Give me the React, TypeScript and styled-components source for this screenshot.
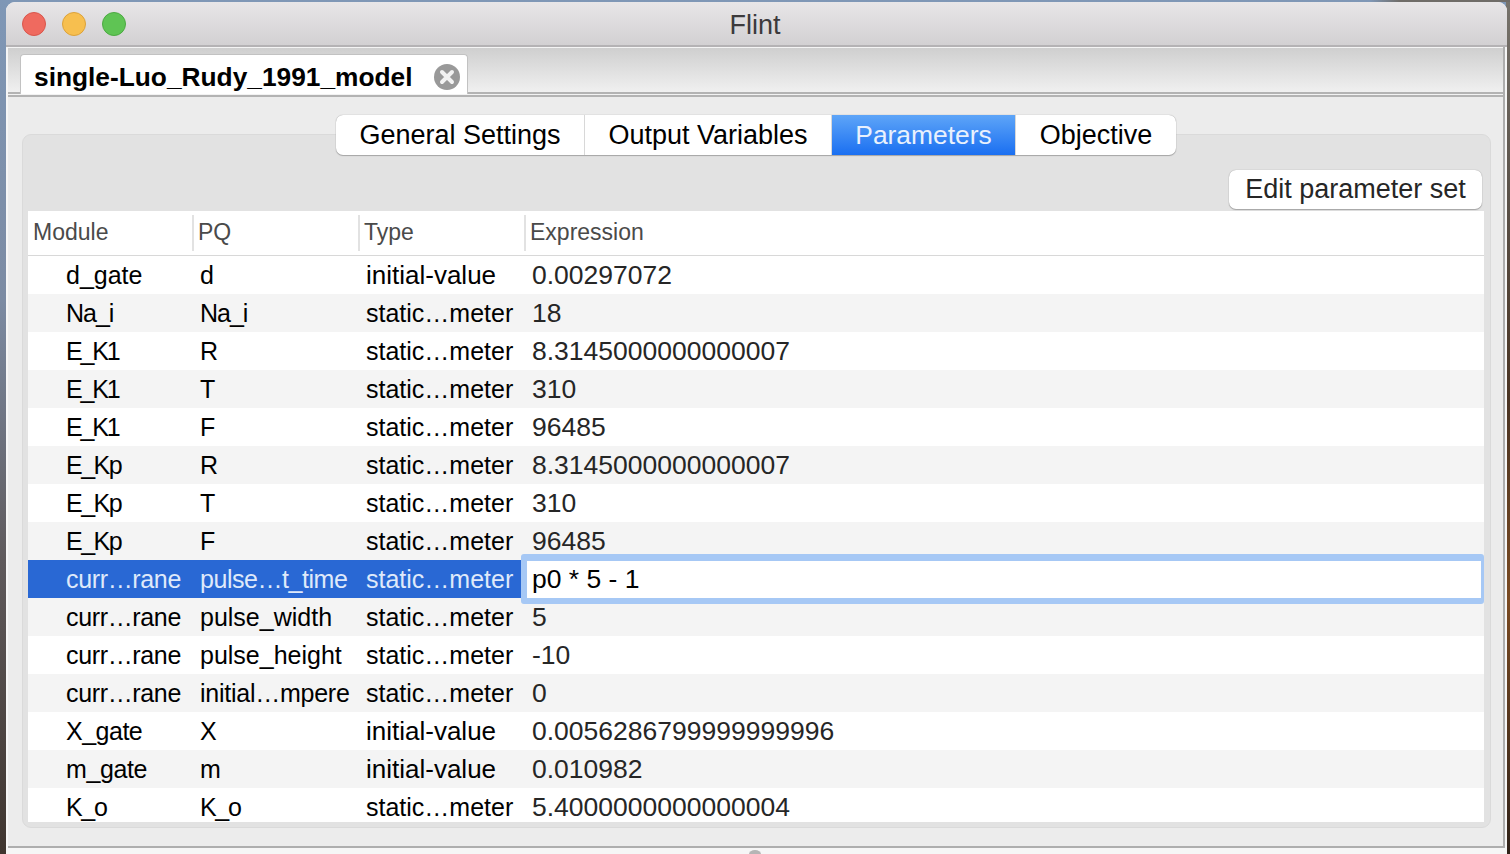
import styled, { createGlobalStyle } from 'styled-components'

const GlobalStyle = createGlobalStyle`
  html, body {
    margin: 0;
    padding: 0;
    height: 100%;
    overflow: hidden;
  }
  body {
    font-family: "Liberation Sans", Arial, sans-serif;
  }
`

const Desktop = styled.div`
  width: 1510px;
  height: 854px;
  box-sizing: border-box;
  padding: 2px 3px 0 6px;
  overflow: hidden;
  background:
    linear-gradient(90deg, transparent 1370px, #6f6c68 1400px) top / 100% 2px no-repeat,
    linear-gradient(180deg, #77736c 0, #5a5148 200px, #4a3423 400px, #7a4a22 600px, #2f2219 854px) right top / 4px 100% no-repeat,
    linear-gradient(180deg, #7f97b6 0, #7c8ba3 300px, #5f5a5c 560px, #3f352f 854px);
`

const Window = styled.div`
  position: relative;
  height: 100%;
  display: flex;
  flex-direction: column;
  background: #f6f6f6;
  border-radius: 9px 9px 0 0;
  overflow: hidden;
`

const TitleBar = styled.div`
  height: 43px;
  flex: none;
  display: flex;
  align-items: center;
  position: relative;
  padding-left: 16px;
  gap: 16px;
  background: linear-gradient(180deg, #e8e6e8 0, #d2d0d2 100%);
  border-bottom: 2px solid #b4b2b4;
`

const Light = styled.span<{ $fill: string; $edge: string }>`
  width: 22px;
  height: 22px;
  border-radius: 50%;
  background: ${(p) => p.$fill};
  border: 1px solid ${(p) => p.$edge};
`

const Title = styled.div`
  position: absolute;
  left: 0;
  right: 3px;
  top: 7px;
  text-align: center;
  font-size: 27px;
  line-height: 32px;
  color: #3c3a3c;
`

const Body = styled.div`
  height: 801px;
  flex: none;
  margin: 0 2px;
  display: flex;
  flex-direction: column;
  box-sizing: border-box;
  border: solid #aeaeae;
  border-width: 0 2px 2px 0;
  background: #ececec;
`

const TabStrip = styled.div`
  height: 47px;
  flex: none;
  box-sizing: border-box;
  padding: 6px 0 0 12px;
  display: flex;
  background: linear-gradient(180deg, #cfcfcf 0, #f0f0f0 100%);
  border-top: 1px solid #f4f4f4;
  border-bottom: 2px solid #b3b3b3;
`

const DocTab = styled.div`
  width: 448px;
  height: 40px;
  box-sizing: border-box;
  display: flex;
  align-items: center;
  justify-content: space-between;
  padding: 5px 7px 0 13px;
  background: #fff;
  border: 1px solid #c2c2c2;
  border-bottom: none;
  border-radius: 4px 4px 0 0;
  font-size: 26.3px;
  font-weight: 700;
  color: #000;
`

const StripGap = styled.div`
  height: 1px;
  flex: none;
  background: #f2f2f2;
`

const Content = styled.div`
  flex: 1;
  min-height: 0;
  border-top: 2px solid #b3b3b3;
  padding: 18px 12px 18px 14px;
  display: flex;
  flex-direction: column;
`

const Group = styled.div`
  position: relative;
  flex: 1;
  min-height: 0;
  margin-top: 19px;
  box-sizing: border-box;
  padding: 35px 5px 5px 5px;
  display: flex;
  flex-direction: column;
  background: #e2e2e2;
  border: 1px solid #dadada;
  border-radius: 9px;
`

const Segments = styled.div`
  position: absolute;
  top: -20px;
  left: 313px;
  display: flex;
  height: 40px;
  background: #fff;
  border-radius: 7px;
  box-shadow: 0 0 1px #8a8a8a, 0 1px 1px #a8a8a8;
  overflow: hidden;
`

const Segment = styled.div<{ $width: number; $active?: boolean }>`
  width: ${(p) => p.$width}px;
  box-sizing: border-box;
  display: flex;
  align-items: center;
  justify-content: center;
  font-size: ${(p) => (p.$active ? 26.4 : 27)}px;
  color: ${(p) => (p.$active ? '#e9f1fd' : '#000')};
  background: ${(p) => (p.$active ? 'linear-gradient(180deg, #5ea5f8 0, #1a6ff1 100%)' : 'transparent')};
  & + & {
    border-left: 1px solid #d8d8d8;
  }
`

const ButtonRow = styled.div`
  display: flex;
  justify-content: flex-end;
  flex: none;
  height: 41px;
  padding-right: 3px;
`

const EditButton = styled.button`
  width: 253px;
  height: 39px;
  padding: 0;
  font: inherit;
  font-size: 27px;
  color: #262626;
  background: #fff;
  border: none;
  border-radius: 7px;
  box-shadow: 0 0 1px #8a8a8a, 0 1px 1px #a8a8a8;
`

const Table = styled.div`
  flex: 1;
  min-height: 0;
  width: 1456px;
  background: #fff;
  overflow: hidden;
`

const HeaderRow = styled.div`
  height: 45px;
  box-sizing: border-box;
  display: grid;
  grid-template-columns: 165px 166px 166px 1fr;
  align-items: center;
  border-bottom: 1px solid #d8d8d8;
`

const HeaderCell = styled.div`
  height: 36px;
  display: flex;
  align-items: center;
  padding: 0 0 2px 5px;
  box-sizing: border-box;
  font-size: 23px;
  color: #4a4a4a;
  & + & {
    margin-left: -1px;
    border-left: 2px solid #e2e2e2;
    padding-left: 4px;
  }
`

const Row = styled.div<{ $odd: boolean; $selected: boolean }>`
  position: relative;
  z-index: ${(p) => (p.$selected ? 1 : 0)};
  height: 38px;
  display: grid;
  grid-template-columns: 165px 166px 166px 1fr;
  align-items: center;
  font-size: 25px;
  color: ${(p) => (p.$selected ? '#dfe9fa' : '#000')};
  background: ${(p) => (p.$selected ? '#2968d4' : p.$odd ? '#f4f4f4' : '#fff')};
`

const Cell = styled.div<{ $indent?: number; $wide?: boolean; $tracking?: number }>`
  padding-left: ${(p) => p.$indent ?? 7}px;
  white-space: nowrap;
  font-size: ${(p) => (p.$wide ? '26px' : 'inherit')};
  letter-spacing: ${(p) => p.$tracking ?? 0}px;
`

const ValueCell = styled(Cell)`
  color: #262626;
  font-size: 26.5px;
`

const Editor = styled.div`
  position: absolute;
  left: 493px;
  right: 0;
  top: -6px;
  bottom: -6px;
  box-sizing: border-box;
  display: flex;
  align-items: center;
  padding-left: 5px;
  font-size: 26.5px;
  background: #fff;
  color: #000;
  border: solid #a6c8f5;
  border-width: 7px 3px 6px 6px;
  border-radius: 3px;
`

const Handle = styled.div`
  position: absolute;
  left: 743px;
  bottom: -4px;
  width: 12px;
  height: 8px;
  border-radius: 50%;
  background: #b5b5b5;
`

const rows: [string, string, string, string][] = [
  ['d_gate', 'd', 'initial-value', '0.00297072'],
  ['Na_i', 'Na_i', 'static…meter', '18'],
  ['E_K1', 'R', 'static…meter', '8.3145000000000007'],
  ['E_K1', 'T', 'static…meter', '310'],
  ['E_K1', 'F', 'static…meter', '96485'],
  ['E_Kp', 'R', 'static…meter', '8.3145000000000007'],
  ['E_Kp', 'T', 'static…meter', '310'],
  ['E_Kp', 'F', 'static…meter', '96485'],
  ['curr…rane', 'pulse…t_time', 'static…meter', 'p0 * 5 - 1'],
  ['curr…rane', 'pulse_width', 'static…meter', '5'],
  ['curr…rane', 'pulse_height', 'static…meter', '-10'],
  ['curr…rane', 'initial…mpere', 'static…meter', '0'],
  ['X_gate', 'X', 'initial-value', '0.0056286799999999996'],
  ['m_gate', 'm', 'initial-value', '0.010982'],
  ['K_o', 'K_o', 'static…meter', '5.4000000000000004'],
]

// the mac font sets these a bit tighter than Liberation Sans does
const tracking: Record<string, number> = {
  E_K1: -2.2,
  E_Kp: -1.5,
  K_o: -1.3,
  Na_i: -1,
  X_gate: -0.5,
  m_gate: -0.4,
  'curr…rane': -0.35,
  'pulse…t_time': -0.45,
  'initial…mpere': -0.25,
}

const SELECTED = 8

function CloseIcon() {
  return (
    <svg width="26" height="26" viewBox="0 0 26 26">
      <circle cx="13" cy="13" r="13" fill="#999" />
      <path d="M8 8 L18 18 M18 8 L8 18" stroke="#f2f2f2" strokeWidth="4" strokeLinecap="round" />
    </svg>
  )
}

export default function App() {
  return (
    <>
      <GlobalStyle />
      <Desktop>
        <Window>
          <TitleBar>
            <Light $fill="#ef6a5f" $edge="#d9564c" />
            <Light $fill="#f7bf4f" $edge="#dca23a" />
            <Light $fill="#5fc454" $edge="#4caa42" />
            <Title>Flint</Title>
          </TitleBar>
          <Body>
            <TabStrip>
              <DocTab>
                single-Luo_Rudy_1991_model
                <CloseIcon />
              </DocTab>
            </TabStrip>
            <StripGap />
            <Content>
              <Group>
                <Segments>
                  <Segment $width={248}>General Settings</Segment>
                  <Segment $width={247}>Output Variables</Segment>
                  <Segment $width={184} $active>Parameters</Segment>
                  <Segment $width={161}>Objective</Segment>
                </Segments>
                <ButtonRow>
                  <EditButton>Edit parameter set</EditButton>
                </ButtonRow>
                <Table>
                  <HeaderRow>
                    <HeaderCell>Module</HeaderCell>
                    <HeaderCell>PQ</HeaderCell>
                    <HeaderCell>Type</HeaderCell>
                    <HeaderCell>Expression</HeaderCell>
                  </HeaderRow>
                  {rows.map((r, i) => (
                    <Row key={i} $odd={i % 2 === 1} $selected={i === SELECTED}>
                      <Cell $indent={38} $tracking={tracking[r[0]]}>{r[0]}</Cell>
                      <Cell $tracking={tracking[r[1]]}>{r[1]}</Cell>
                      <Cell $wide={r[2] === 'initial-value'}>{r[2]}</Cell>
                      {i === SELECTED ? <Editor>{r[3]}</Editor> : <ValueCell>{r[3]}</ValueCell>}
                    </Row>
                  ))}
                </Table>
              </Group>
            </Content>
          </Body>
          <Handle />
        </Window>
      </Desktop>
    </>
  )
}
